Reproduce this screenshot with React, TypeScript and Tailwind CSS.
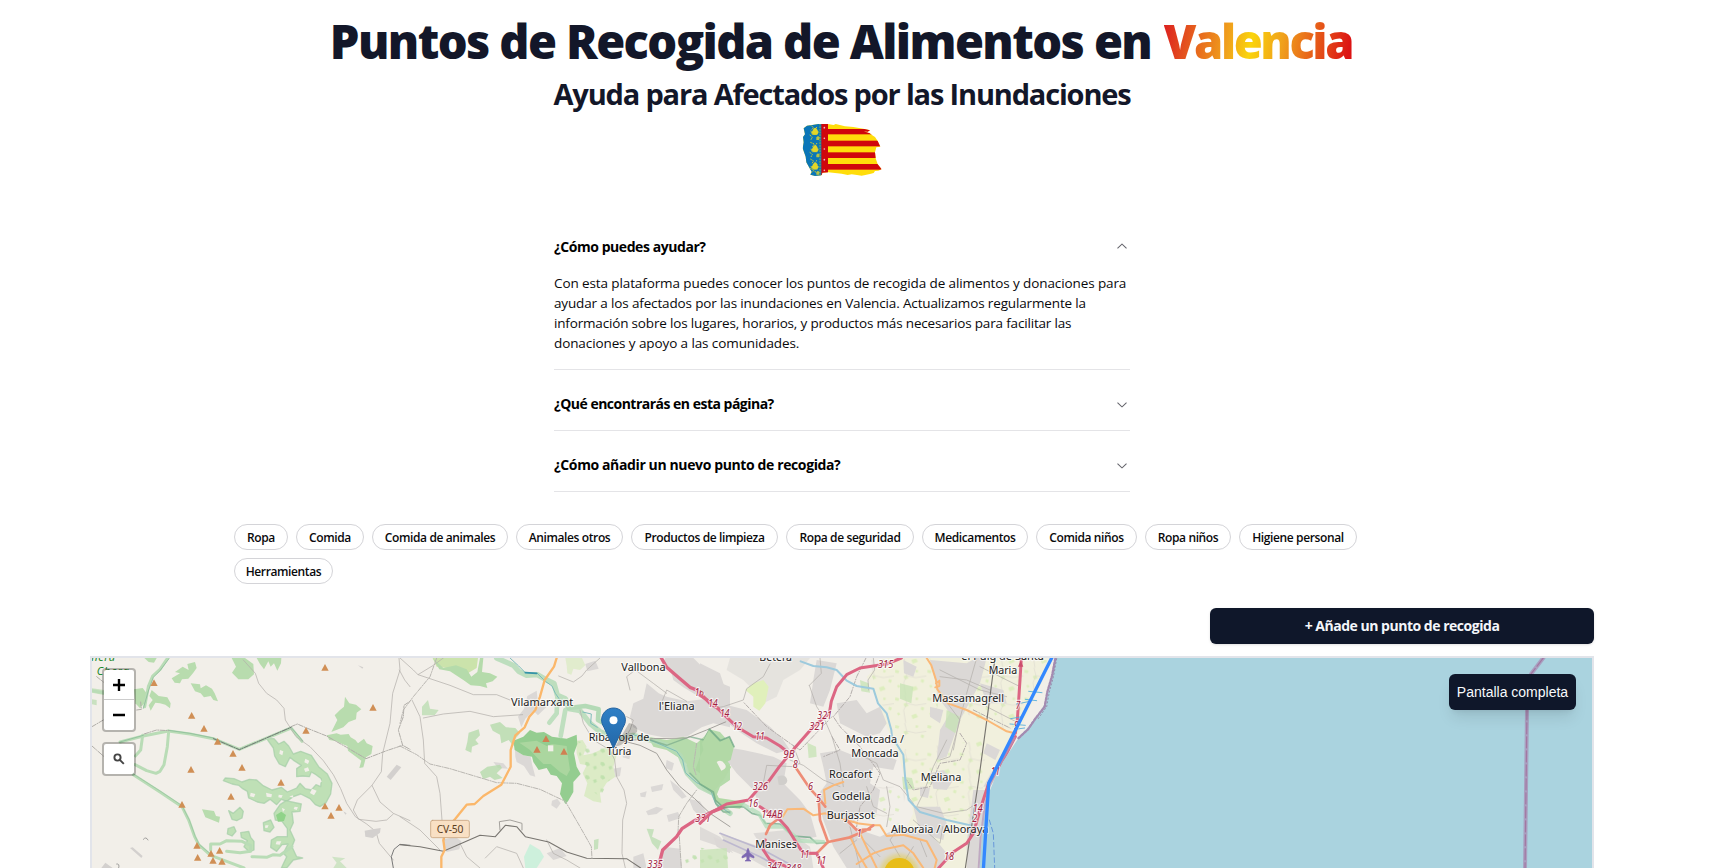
import { useState } from "react";

const chips: { label: string; w: string }[] = [
  { label: "Ropa", w: "w-[54px]" },
  { label: "Comida", w: "w-[68px]" },
  { label: "Comida de animales", w: "w-[136px]" },
  { label: "Animales otros", w: "w-[107px]" },
  { label: "Productos de limpieza", w: "w-[147px]" },
  { label: "Ropa de seguridad", w: "w-[128px]" },
  { label: "Medicamentos", w: "w-[106px]" },
  { label: "Comida niños", w: "w-[101px]" },
  { label: "Ropa niños", w: "w-[86px]" },
  { label: "Higiene personal", w: "w-[118px]" },
  { label: "Herramientas", w: "w-[99px]" },
];

const faqs = [
  {
    q: "¿Cómo puedes ayudar?",
    t: "tracking-[-0.44px]",
    a: [
      { text: "Con esta plataforma puedes conocer los puntos de recogida de alimentos y donaciones para", t: "tracking-[-0.105px]" },
      { text: "ayudar a los afectados por las inundaciones en Valencia. Actualizamos regularmente la", t: "tracking-[-0.145px]" },
      { text: "información sobre los lugares, horarios, y productos más necesarios para facilitar las", t: "tracking-[-0.17px]" },
      { text: "donaciones y apoyo a las comunidades.", t: "tracking-[-0.1px]" },
    ],
  },
  {
    q: "¿Qué encontrarás en esta página?",
    t: "tracking-[-0.51px]",
    a: [{ text: "Puntos de recogida, horarios y productos necesarios.", t: "tracking-[-0.1px]" }],
  },
  {
    q: "¿Cómo añadir un nuevo punto de recogida?",
    t: "tracking-[-0.38px]",
    a: [{ text: "Pulsa el botón para añadir un punto nuevo.", t: "tracking-[-0.1px]" }],
  },
];

function Chevron({ open }: { open: boolean }) {
  return (
    <svg viewBox="0 0 15 15" className={open ? "size-4 rotate-180 text-[#64646b]" : "size-4 text-[#64646b]"} fill="currentColor">
      <path
        fillRule="evenodd"
        clipRule="evenodd"
        d="M3.13523 6.15803C3.3241 5.95657 3.64052 5.94637 3.84197 6.13523L7.5 9.56464L11.158 6.13523C11.3595 5.94637 11.6759 5.95657 11.8648 6.15803C12.0536 6.35949 12.0434 6.67591 11.842 6.86477L7.84197 10.6148C7.64964 10.7951 7.35036 10.7951 7.15803 10.6148L3.15803 6.86477C2.95657 6.67591 2.94637 6.35949 3.13523 6.15803Z"
      />
    </svg>
  );
}

function Flag() {
  return (
    <svg viewBox="0 0 285 210" className="h-[70px] w-[95px]">
      <defs>
        <clipPath id="brush">
          <path d="M26 40L36 32L52 30L70 27L98 27L116 30L122 27L150 34L175 36L205 41L225 46L218 50L206 49L224 55L234 62L240 66L248 78L256 95L244 97L240 112L242 130L248 148L260 163L250 167L240 168L236 174L225 177L200 182L186 180L170 178L158 180L140 176L100 172L82 173L80 181L60 183L46 179L50 170L44 160L34 142L32 125L23 100L26 82L24 66L30 58Z" />
        </clipPath>
      </defs>
      <g clipPath="url(#brush)">
        <rect width="285" height="210" fill="#ffdd0b" />
        <g fill="#d0060c">
          <rect x="80" y="42" width="200" height="16" />
          <rect x="80" y="77" width="200" height="17" />
          <rect x="80" y="112" width="200" height="17" />
          <rect x="80" y="147" width="200" height="17" />
          <rect x="78" y="20" width="21" height="160" />
        </g>
        <rect x="15" y="20" width="64" height="170" fill="#0a76b8" />
        <g fill="none" stroke="#c9ca35" strokeWidth="3">
          <path d="M75 26v155" stroke="#5d9b6c" strokeWidth="5" strokeDasharray="5 3" />
          <path d="M46 30l10 8l-8 8M66 36l-6 6l8 6M46 82l12 5l-6 9M66 84l-5 8M46 132l10 6l-6 8M66 136l-6 6M48 174l8-7l9 6M44 60l8 6l-4 8M44 112l8 6l-4 8M44 160l8 4" strokeDasharray="5 2" />
        </g>
        {[40, 92, 144].map((y) => (
          <g key={y} fill="#e3d628">
            <path d={`M54 ${y + 4}q7-12 13 0l3 10l-6 5h-8l-6-6z`} />
            <path d={`M46 ${y + 9}l26 0l-5 11h-16z`} opacity=".65" />
            <path d={`M64 ${y + 27}l5-4l5 4l-2 8h-8z`} opacity=".8" />
          </g>
        ))}
        <g fill="#f2b8c8">
          {[38, 70, 102, 134, 166].map((y) => (
            <circle key={y} cx="88" cy={y} r="2.5" />
          ))}
        </g>
      </g>
    </svg>
  );
}

const peaksWest = [
  [222, 129], [335, 227], [372, 266], [413, 305], [459, 341], [333, 389], [486, 383], [603, 428], [453, 470], [306, 494],
  [735, 83], [879, 203], [678, 272], [735, 499], [777, 503], [753, 527], [351, 617], [419, 632], [393, 641], [353, 653], [399, 662], [426, 665],
];

type LabelProps = { x: number; y: number; w: number; children: string; size?: number };
function Place({ x, y, w, children, size = 35 }: LabelProps) {
  return (
    <text x={x} y={y} textLength={w} fontSize={size} lengthAdjust="spacingAndGlyphs" fill="#222" stroke="#fff" strokeOpacity=".65" strokeWidth="7" strokeLinejoin="round" paintOrder="stroke">
      {children}
    </text>
  );
}
function Exit({ x, y, w, children }: LabelProps) {
  return (
    <text x={x} y={y} textLength={w} lengthAdjust="spacingAndGlyphs" fontSize="30" fontStyle="italic" fill="#a01f42" stroke="#fff" strokeOpacity=".7" strokeWidth="7" paintOrder="stroke">
      {children}
    </text>
  );
}

function RegionMap() {
  return (
    <svg viewBox="92 658 1500 210" className="block h-[210px] w-[1500px] font-['Noto_Sans',sans-serif]">
      <defs>
        <filter id="soft" x="-50%" y="-50%" width="200%" height="200%">
          <feGaussianBlur stdDeviation="6" />
        </filter>
        <linearGradient id="pin" x1="0" y1="0" x2="0" y2="1">
          <stop offset="0" stopColor="#2e7fc6" />
          <stop offset="1" stopColor="#2468a8" />
        </linearGradient>
        <pattern id="fields" width="97" height="83" patternUnits="userSpaceOnUse">
          <path d="M4 6l12 3l-3 8l-10-2zM28 26l9-4l7 9l-11 5zM66 6l7 2l-2 7l-7-2zM9 53l6-2l4 7l-7 3zM52 60l14-5l6 10l-16 6zM82 34l9 3l-3 9l-8-4z" fill="#d2edae" opacity=".65" />
          <path d="M32 0l6 24l-9 21l6 38M38 24l27 6l32-5" fill="none" stroke="#d8d5cc" strokeWidth="1.600" />
        </pattern>
        <pattern id="scrub" width="46" height="40" patternUnits="userSpaceOnUse">
          <path d="M5 5l9 2l4 8l-8 4l-7-6zM27 20l9-3l3 8l-8 5z" fill="#b9dfa8" opacity=".8" />
        </pattern>
      </defs>
      <rect x="92" y="658" width="1500" height="210" fill="#f2efe9" />

      {/* western hills */}
      <g transform="translate(80 640) scale(.333333)" strokeLinejoin="round" strokeLinecap="round">
        <g fill="#b8dcae">
          <path d="M455 54L495 54L520 72L522 103L505 118L475 118L456 98L468 80Z" />
          <path d="M530 54L604 54L603 70L592 92L582 70L572 80L565 64L552 88L540 72Z" />
          <path d="M275 115L300 100L285 96L308 80L326 90L322 72L345 66L350 84L340 98L325 116L306 118L300 130L284 128Z" />
          <path d="M332 130L360 133L362 145L378 136L396 146L404 160L414 184L400 180L392 168L372 172L362 160L345 154Z" />
          <path d="M162 148L188 144L200 160L193 190L180 205L166 190Z" />
          <path d="M215 150L236 168L262 172L272 190L270 205L256 194L240 190L226 188L212 212L206 196L218 180L208 168Z" />
          <path d="M193 54L230 54L222 68L206 66Z" />
          <path d="M795 170L808 190L828 194L844 208L830 218L828 238L806 246L790 262L754 276L772 240L764 226L780 210L792 200Z" />
          <path d="M740 286L770 280L782 284L806 282L812 292L826 300L834 310L852 296L860 310L878 318L874 342L858 352L850 382L838 384L844 362L820 344L804 332L802 318L786 312L770 304L748 300Z" />
          <path d="M366 508L402 513L408 528L420 530L417 548L402 542L376 532Z" />
          <path d="M36 145L72 150L72 165L36 158Z M36 178l14 2v16l-14-3z" opacity=".7" />
          <path d="M756 650L796 655L780 664L800 684L760 684L770 668Z" opacity=".6" />
        </g>
        <g fill="#bfe0b6" stroke="#a4cda6" strokeWidth="4" strokeOpacity=".7">
          <path d="M560 296L582 296L596 312L612 304L626 318L640 342L662 334L694 346L716 380L742 402L756 430L752 462L738 488L720 500L706 494L690 476L662 462L640 470L620 484L604 478L590 494L570 478L552 490L532 486L506 474L502 454L488 446L476 436L456 432L430 422L436 414L462 416L486 426L508 418L530 420L548 436L576 450L604 442L622 456L650 444L660 430L676 446L694 450L708 434L722 440L724 416L708 404L694 396L688 410L668 408L650 410L650 386L664 376L642 362L630 352L616 380L598 372L584 348L580 324Z" />
          <path d="M600 494L618 482L664 492L660 514L636 516L640 548L630 570L644 600L636 620L650 650L668 654L640 660L620 684L604 684L620 650L610 640L624 612L606 614L590 634L572 622L574 600L592 590L608 590L622 590L622 566L606 544L586 540L582 520Z" />
          <path d="M550 548L572 540L582 562L570 576L552 572Z M444 566L462 560L468 574L456 588L442 582Z M482 578L506 574L512 592L522 604L522 630L508 636L492 620L502 602L484 592Z M446 512L460 520L480 502L490 514L486 534L470 542L456 538Z" />
        </g>
        <path
          d="M512 458l14 4l-4 10l-12-3zM558 458l18 5l-2 9l-14-2zM596 464l12 2l-4 8l-9-2zM672 386l12-4l4 10l-12 4zM696 446l14 6l-8 14l-12-7zM590 604l14 0l-5 10l-12-1zM556 556l10 0l-4 8l-7-1zM644 500l10 2l-4 8l-9-3zM600 330l10 4l-3 12l-9-5zM676 356l12 6l-4 10l-11-5zM716 414l10 10l-8 6zM628 470l10-4l3 7zM606 504l9 4l-6 8z"
          fill="#f2efe9"
        />
        <path d="M588 525l16-10l14 10l-6 18l-18 2z" fill="#90d389" />
        <g fill="none" stroke="#b9dcb6" strokeWidth="9">
          <path d="M263 54L240 88L218 108L205 140L194 200" />
          <path d="M120 306L190 288L265 273L330 282L400 296L478 328L633 264L666 304" />
          <path d="M266 274L262 320L252 374L240 394L228 400L200 392L165 374M188 286L182 330L166 348" />
          <path d="M160 404L240 456L306 500L326 540L344 590L356 614L392 646L440 664L492 684" />
          <path d="M392 630L392 612L420 612L440 602L486 604L512 616L512 634L480 638L440 634M516 650L560 652L580 644L600 646L636 620" />
          <path d="M36 152L70 158" />
        </g>
        <g fill="none" stroke="#8dbd9a" strokeWidth="2.5">
          <path d="M265 271L330 280L400 294L478 329L633 262L668 302M190 286L120 306M267 56L240 92L220 112L206 150L190 205" />
          <path d="M160 402L240 453L306 497L328 540L346 590L358 614L394 644" strokeOpacity=".7" />
        </g>
        <g fill="none" stroke="#b3b0ab" strokeWidth="2.2">
          <path d="M490 60L526 100L536 130L560 160L590 180L612 205L616 240L648 290L690 320L730 362L760 404L782 446L800 490L826 530L860 552L888 575L898 610L940 660" />
          <path d="M957 54L960 90L938 160L930 250L908 340L904 395L876 436L900 486L940 520L990 542M876 436L832 480L820 510L836 538L888 544L920 540L940 522" />
          <path d="M958 90L974 120L990 140" />
          <path d="M940 684L934 650L942 628L960 613L990 616" stroke="#777" strokeWidth="3" />
        </g>
        <g fill="none" stroke="#b0ada8" strokeWidth="3" strokeDasharray="14 4 3 4">
          <path d="M192 282L230 270L266 272M633 260L652 252L680 264L740 288L800 322L858 356L920 332L968 316L990 328M968 316L955 270L970 230L972 196L990 184" />
          <path d="M36 260L70 240M36 318L70 348M50 110L70 126M170 210L184 208L182 186" />
          <path d="M400 296L478 329L633 262" stroke="#777" />
        </g>
        <g fill="#d3d0ce">
          <path d="M854 572L878 568L902 564L900 578L878 594L856 590Z" />
          <path d="M920 410L950 374L964 382L932 420Z" />
          <path d="M150 624L158 622L188 648L184 654ZM64 684l12-16l22 16zM790 514l10 6l-4 4zM834 76l16 6l-3 4z" />
        </g>
        <path d="M190 598q8-10 14 2M110 672q10-2 6 12" fill="none" stroke="#777" strokeWidth="2" />
        <g fill="#d08f55">
          {peaksWest.map(([x, y]) => (
            <path key={`${x}-${y}`} d={`M${x} ${y - 11}l11 20h-22z`} />
          ))}
        </g>
        <g fill="#1d8a2c" fontStyle="italic" fontSize="33">
          <text x="34" y="62" textLength="71">nera</text>
          <text x="50" y="104" textLength="96">Chera</text>
        </g>
      </g>

      {/* Túria valley */}
      <g transform="translate(400 640) scale(.333333)" strokeLinejoin="round" strokeLinecap="round">
        <g fill="#dbd8d6">
          <path d="M740 130L776 160L800 170L860 184L920 176L990 196L990 262L940 250L905 262L860 290L790 292L740 282L700 262L690 230L700 190L730 176Z" />
          <path d="M796 54L880 54L916 90L940 120L990 140L990 210L940 196L890 166L850 142L820 120L812 90L780 84Z" />
          <path d="M382 168L410 152L414 190L440 200L414 226L400 212L376 236L364 262L354 230L372 206Z" />
          <path d="M345 330L370 346L392 350L396 372L406 410L390 406L372 378L350 366L346 350Z" />
          <path d="M126 600L166 590L184 604L178 628L140 636Z" />
          <path d="M456 482L472 476L482 490L470 506L454 496Z" />
          <path d="M640 386L664 382L660 408L646 412ZM670 330L694 332L688 358L668 352ZM752 440L790 432L786 450L756 456ZM738 514L770 500L790 506L770 522L744 526ZM720 460l20-6l-4 18l-14-2zM800 526l34-10l8 18l-36 12zM866 476L900 484L920 520L900 530L880 510ZM810 420L836 440L860 470L846 476L820 450Z" />
          <path d="M790 620L840 626L846 684L790 684L780 650ZM700 650L730 640L740 684L700 684ZM556 72l30-10l10 24l-34 8zM800 360l22 10l-6 22l-20-8z" />
          <path d="M940 590L990 610L990 640L950 620ZM440 640L480 624L500 648L460 660ZM280 366l30 4l14 16l-30-2z" />
        </g>
        <path d="M98 54L234 54L230 84L206 98L212 118L196 112L180 88L140 84L110 80Z" fill="#cbe3ab" />
        <g fill="#dcebc6">
          <path d="M528 302L548 300L560 320L550 346L580 340L620 320L650 346L640 380L646 410L620 428L600 460L604 488L580 484L552 468L562 430L548 400L560 376L540 372L530 340Z" />
          <path d="M496 54L546 54L556 76L540 90L520 86L514 104L502 100L500 76Z" opacity=".8" />
        </g>
        <path d="M528 302L650 330L640 400L600 470L560 440Z" fill="url(#scrub)" />
        <g fill="#b5dbab">
          <path d="M98 54L130 84L168 76L200 88L214 110L232 96L240 54L250 54L246 96L270 100L292 110L278 124L258 130L262 144L240 138L212 136L190 120L150 94L118 88Z" />
          <path d="M206 278L236 268L240 286L226 300L236 312L216 320L214 338L196 330L202 306Z M270 254L300 246L318 262L346 264L360 280L346 296L340 318L326 300L304 310L300 284L278 272Z M240 396L262 380L300 374L306 384L290 400L308 414L284 420L270 410L250 418Z" opacity=".8" />
          <path d="M740 566L762 568L756 590L784 604L774 630L756 610Z M66 200L84 180L90 206L116 210L104 226L66 226Z M582 600l14-4l-2 30l-12 4z" opacity=".7" />
        </g>
        <path d="M340 302L370 290L390 270L410 278L432 276L456 290L500 296L530 284L532 312L522 340L530 380L542 402L520 426L520 456L504 484L496 492L480 462L486 430L470 408L452 404L440 384L416 390L400 366L396 350L370 346L344 330Z" fill="#94cd90" />
        <path d="M358 308L410 302L440 318L456 312L500 318L504 350L510 390L500 408L480 396L452 372L430 372L412 354L390 330Z" fill="#abd69f" />
        <path d="M444 316l16 0l0 18l-16 0z" fill="#f2efe9" />
        <path d="M744 290L800 300L850 290L890 310L912 290L928 268L960 276L990 310L990 420L960 440L948 470L910 450L886 418L866 400L858 370L832 350L800 330L760 320Z" fill="#b5dbab" />
        <path d="M900 300L940 290L970 320L940 360L900 400L886 390L900 350Z" fill="#abd6a1" />
        <g fill="none">
          <path d="M290 54L340 76L356 94L380 106L412 104L440 120L462 130L472 166L496 176L506 206L540 212L570 250L600 275L650 296L700 286L750 300L800 316L840 346L862 400L900 440L940 460L960 500L990 520" stroke="#b4dab6" strokeWidth="16" strokeOpacity=".85" />
          <path d="M472 170L470 220L448 248M496 210L482 288" stroke="#bfdfbf" strokeWidth="14" />
          <path d="M506 204L556 198L596 208L594 240L616 252" stroke="#b4dab6" strokeWidth="14" />
          <path d="M330 54L356 78L376 98L412 100L436 124L456 138L466 160L480 180L510 196M548 216L574 222L572 250L592 262M700 284L760 304L830 334L848 360L856 398L890 428L930 444L946 490L990 520" stroke="#7dbcb9" strokeWidth="3" />
          <path d="M744 298L800 316L870 290L912 300L928 268L960 300L990 320M870 400L900 430L942 460L948 492L970 516L990 516" stroke="#7aab8c" strokeWidth="4.500" strokeOpacity=".7" />
          <path d="M376 98L410 100" stroke="#3593a8" strokeWidth="5" />
        </g>
        <g fill="none" stroke="#b3b0ab" strokeWidth="2.2">
          <path d="M0 54L40 90L54 104L100 76L130 54M54 104L150 136L220 164L290 164L330 180M70 234L130 222L210 214L280 230L368 224M36 180L60 230L70 300L74 370L110 410L120 460L126 540L134 600" />
          <path d="M476 108L520 126L546 108L560 90L600 54M540 210L550 250L580 300L630 330L644 360L650 410L672 450L680 490L668 540L666 640L676 684M680 230L700 240L690 270L670 300M690 150L680 110L706 90L760 130L800 160M780 200L800 150L860 184" />
          <path d="M660 300L720 316L770 340L800 390L840 440L884 476L930 520L960 540L990 560M990 240L920 270L860 294L760 296L700 300M300 570L298 545L330 540L366 550L366 570" stroke="#9e9b97" strokeWidth="2.800" />
          <path d="M0 530L60 570L120 630M180 610L200 650L240 684M440 600L460 640L500 660L540 684M256 654L290 620L350 640L370 684" />
        </g>
        <path d="M0 614L60 620L130 634L180 612L240 586L286 590L316 556L350 560L376 590L446 606L500 636L560 655L680 656L722 684" fill="none" stroke="#77746f" strokeWidth="3.2" />
        <g fill="none" stroke="#b9b6b1" strokeWidth="3" strokeDasharray="14 4 3 4">
          <path d="M110 54L90 110L40 170L10 210L0 250M0 318L50 344L90 372L150 386L230 410L290 428L350 430L420 448L496 484L540 560L574 620L576 656M834 580L836 530L860 490L890 450M838 590L844 684M890 310L880 380L888 404" />
        </g>
        <path d="M470 54L462 80L434 120L420 170L406 210L388 230L374 262L346 286L332 330L332 380L304 434L250 468L224 492L200 494L166 536L140 566L130 600L134 630L124 650L124 684" fill="none" stroke="#fbb76a" strokeWidth="7" />
        <path d="M372 650L390 612L420 630L432 650L410 684L376 684Z" fill="#c9f0da" opacity=".9" />
        <path d="M850 640L880 622L990 630L990 684L860 684Z" fill="url(#scrub)" />
        <path d="M784 54L800 82L840 116L870 142L890 150L930 190L962 210L990 238" fill="none" stroke="#dc6683" strokeWidth="10" />
        <path d="M774 684L788 630L830 590L846 566L880 544L940 514L990 494" fill="none" stroke="#dc6683" strokeWidth="10" />
        <g fill="#d08052">
          <path d="M438 286l11 20h-22zM411 318l11 20h-22zM492 324l11 20h-22z" />
        </g>
        <g>
          <rect x="92" y="541" width="116" height="52" rx="6" fill="#f9e0c4" stroke="#c9a580" strokeWidth="2.5" />
          <text x="110" y="580" textLength="80" fontSize="31" fill="#5b3d1e">CV-50</text>
        </g>
        <Place x={333} y={198} w={187}>Vilamarxant</Place>
        <Place x={664} y={92} w={133}>Vallbona</Place>
        <Place x={776} y={210} w={108}>l'Eliana</Place>
        <Place x={566} y={304} w={182}>Riba-roja de</Place>
        <Place x={620} y={346} w={74}>Túria</Place>
        <Exit x={884} y={167} w={28}>16</Exit>
        <Exit x={886} y={547} w={46}>331</Exit>
        <Exit x={742} y={684} w={46}>335</Exit>
      </g>

      {/* Valencia metropolitan area */}
      <g transform="translate(700 640) scale(.333333)" strokeLinejoin="round" strokeLinecap="round">
        <path d="M560 54L1060 54L950 290L870 420L838 684L560 684L640 520L600 360L560 260L530 180L500 110Z" fill="#f1f0dd" />
        <path d="M500 60L690 54L720 140L700 300L600 300L540 180Z M590 330L860 300L840 560L640 500Z M780 60L1050 60L950 280L740 200Z M520 440L620 440L600 560L520 540Z" fill="url(#fields)" />
        <g fill="#dbd8d6">
          <path d="M90 54L330 54L300 90L250 120L230 170L190 190L160 150L130 120L80 90Z" opacity=".55" />
          <path d="M0 70L60 100L80 160L50 180L0 150Z M60 190L140 210L210 260L250 300L270 330L230 340L170 310L110 270L60 230Z" />
          <path d="M350 60L410 70L390 150L370 200L330 190L340 120Z M410 190L470 180L500 220L540 200L560 250L540 280L500 290L460 270L420 250Z" />
          <path d="M70 320L130 330L220 350L260 370L250 430L300 480L330 520L350 590L300 600L260 560L180 500L160 450L110 400L80 360Z" />
          <path d="M360 340L420 330L470 350L540 340L590 360L580 390L520 380L510 430L540 450L530 520L480 520L450 560L540 590L600 560L700 590L740 640L720 684L440 684L400 620L370 540L350 470L380 430L370 380Z" />
          <path d="M690 60L800 70L830 54L860 54L840 130L780 240L740 350L710 360L720 270L750 220L720 180Z M840 130L910 150L920 190L860 190Z M900 350L940 290L920 370L870 440L850 440Z M820 450L860 450L850 600L836 684L800 684L800 610Z" />
          <path d="M690 400L730 390L760 420L740 450L700 446Z M640 500L720 500L740 550L730 600L660 580Z M610 60L650 80L640 110L612 100ZM690 200L730 210L720 250L690 230ZM660 440l30 4l-6 30l-24-6zM860 310l40 20l-14 30l-36-20z" />
          <path d="M160 580L260 570L330 620L340 684L200 684L190 630Z M0 560L60 590L100 640L60 620L0 600Z M60 580L180 620L250 684L200 684L140 650L90 630Z" opacity=".9" />
        </g>
        <path d="M136 150L160 130L190 120L206 140L196 190L178 212L160 200L160 170Z" fill="#e0f0bb" />
        <g fill="#c6e3b3">
          <path d="M322 308L348 320L350 350L326 354ZM480 120l26 10l4 28l-26-4zM740 210l40 20l-14 50l-30-20zM606 410l30 4l8 34l-34 0zM0 630L80 624L84 684L0 684ZM600 130l40 10l-6 50l-34-14z" opacity=".75" />
          <path d="M232 410q26-10 30 12q-2 16-26 12z" fill="#d0cecb" />
        </g>
        <path d="M0 350L10 330L6 310L28 268L60 300L88 290L102 320L92 360L72 370L94 380L70 420L44 450L56 474L136 486L120 506L70 500L44 480L40 460L0 432Z" fill="#b2d9a6" />
        <path d="M28 268L60 302L88 290L102 320M0 432L40 456L46 480L70 502L130 500L156 520L180 526L196 550L240 552L280 588L330 592L350 610L384 608" fill="none" stroke="#6ca786" strokeWidth="5" strokeOpacity=".75" />
        <path d="M130 494L176 520L200 560L250 560L300 602L370 606" fill="none" stroke="#aedcb6" strokeWidth="12" strokeOpacity=".7" />
        <path d="M50 366q14-10 24 6q10 12-10 20z" fill="#f2efe9" />
        <g fill="none" stroke="#b3b0ab" strokeWidth="2.2">
          <path d="M210 72L190 110L140 146L130 180L70 200L44 204M360 54L364 100L328 136M328 136L350 200L370 230L396 290L420 370L430 440M506 150L504 120L524 90L520 54M280 318L300 370L280 380L200 376L190 430M270 360L310 376L370 420L420 440" />
          <path d="M640 490L600 440L550 420L530 370L490 350M740 300L700 380L670 460L650 500L730 520L800 510L830 490M720 160L780 240L750 350L720 360M830 54L800 160L776 250L760 330M860 200L946 244M720 90L840 150L920 170M840 80L960 140M720 110L800 120L870 150" />
          <path d="M560 440L570 500L560 560M500 440L520 500L560 520M640 540L720 610L728 560M600 560L570 600L600 650M490 600L540 650M640 620L600 684M450 560L480 684M660 600L680 650M420 640L470 600" />
        </g>
        <g fill="none" stroke="#b3adab" strokeWidth="3" strokeDasharray="13 5 3 5">
          <path d="M498 54L470 110L450 170L400 230L420 260L450 290L480 320L540 400L520 450L480 500L470 560M396 230L300 330L270 310L200 260L130 186M396 290L420 330L370 350M780 280L800 310L780 360L720 370L690 440L640 450L620 420M820 210L930 264" />
        </g>
        <path d="M885 54L866 200L836 420L796 684" fill="none" stroke="#77746f" strokeWidth="3.4" />
        <path d="M60 580L190 630L290 684M70 600L180 650L240 684" fill="none" stroke="#bdb8cf" strokeWidth="5" />
        <path d="M302 64L340 78L380 82L410 90L440 122L470 138L520 146L534 190L560 220L574 270L576 290L610 344L616 420L626 480L660 516L740 540L810 556" fill="none" stroke="#9dcadd" strokeWidth="6" />
        {/* secondary roads */}
        <g fill="none" stroke="#fab877" strokeWidth="6">
          <path d="M680 54L694 76L708 120L712 148L744 190L800 210L860 240L920 274L944 280M708 130l10-8l0 16l-12 4" />
          <path d="M376 490L372 450L400 436L430 426M248 530L262 508L310 506L340 526L376 520L400 530L470 548" />
          <path d="M450 590L474 640L500 684M480 580L530 684M470 672L520 640L560 626L610 616L640 640L670 684M470 550L520 556L540 556L560 588L610 584L680 604L710 660L704 684" />
        </g>
        <g fill="none" stroke="#ee8d76" strokeWidth="8">
          <path d="M288 384L330 446L352 470L376 500M356 478L360 540L384 606L450 592L500 570L520 556M230 540L210 556L198 582M384 606L350 640L330 640M440 540L470 570L510 568" />
        </g>
        <g fill="none" stroke="#dc6683" strokeWidth="9">
          <path d="M604 54L560 72L480 84L440 104L410 140L394 184L388 220L340 260L284 324L238 380L206 424L172 450L146 480L80 492L36 516L0 550" />
          <path d="M0 166L40 192L72 224L110 260L160 290L200 294L240 318L270 342M240 540L262 564L290 610L310 640L350 640M180 500L240 540M196 600L190 630L210 660L260 680M350 640L370 684" />
          <path d="M964 54L960 120L952 240L946 280M946 290L906 366L866 430L840 510L820 580L800 610L760 636L716 684" />
        </g>
        <path d="M962 62l8 18h-16z" fill="#cc4d6d" />

        {/* sea */}
        <path d="M1066 52L2700 52L2700 690L838 690L846 590L858 480L884 416L908 366L958 290L984 262L1012 226L1036 190L1048 140L1056 100Z" fill="#aad3df" />
        <path d="M1066 56L1056 108L1042 156L1034 200L1006 236L984 268L954 296" fill="none" stroke="#a48ab0" strokeWidth="7" strokeDasharray="7 5" />
        <path d="M1070 56L1061 108L1048 156L1040 200L1012 240" fill="none" stroke="#8c7399" strokeWidth="2" strokeDasharray="4 7" />
        <path d="M944 294L900 374L868 440L854 500L842 590L836 684" fill="none" stroke="#b495b8" strokeWidth="6" strokeOpacity=".7" />
        <path d="M986 154l40 4M976 178l34 4M950 192l40-8M932 236l34-6M930 252l46 4M944 268l30-4" stroke="#4ca8d8" strokeWidth="2.5" />
        <path d="M868 540L880 580L884 684" fill="none" stroke="#5b8cd8" strokeWidth="2.5" strokeDasharray="14 9" />

        <Place x={178} y={62} w={98}>Bétera</Place>
        <Place x={784} y={61} w={248}>el Puig de Santa</Place>
        <Place x={866} y={103} w={86}>Maria</Place>
        <Place x={697} y={186} w={215}>Massamagrell</Place>
        <Place x={438} y={308} w={174}>Montcada /</Place>
        <Place x={454} y={351} w={142}>Moncada</Place>
        <Place x={387} y={413} w={130}>Rocafort</Place>
        <Place x={662} y={423} w={122}>Meliana</Place>
        <Place x={396} y={480} w={116}>Godella</Place>
        <Place x={380} y={537} w={144}>Burjassot</Place>
        <Place x={573} y={580} w={292}>Alboraia / Alboraya</Place>
        <Place x={166} y={624} w={125}>Manises</Place>
        <Exit x={25} y={200} w={28}>14</Exit>
        <Exit x={60} y={231} w={28}>14</Exit>
        <Exit x={98} y={269} w={28}>12</Exit>
        <Exit x={166} y={300} w={28}>11</Exit>
        <Exit x={250} y={354} w={34}>9B</Exit>
        <Exit x={278} y={384} w={15}>8</Exit>
        <Exit x={352} y={237} w={44}>321</Exit>
        <Exit x={328} y={270} w={46}>321</Exit>
        <Exit x={534} y={84} w={46}>315</Exit>
        <Exit x={158} y={451} w={46}>326</Exit>
        <Exit x={145} y={501} w={29}>16</Exit>
        <Exit x={184} y={535} w={64}>14AB</Exit>
        <Exit x={324} y={449} w={15}>6</Exit>
        <Exit x={348} y={486} w={15}>5</Exit>
        <Exit x={471} y={591} w={14}>1</Exit>
        <Exit x={300} y={653} w={28}>11</Exit>
        <Exit x={349} y={673} w={30}>11</Exit>
        <Exit x={200} y={690} w={46}>347</Exit>
        <Exit x={258} y={696} w={46}>348</Exit>
        <Exit x={818} y={517} w={30}>14</Exit>
        <Exit x={817} y={545} w={15}>2</Exit>
        <Exit x={872} y={404} w={28}>11</Exit>
        <Exit x={947} y={208} w={14}>7</Exit>
        <Exit x={942} y={268} w={14}>9</Exit>
        <Exit x={732} y={659} w={30}>18</Exit>
        <path d="M144 626q4 2 4 12l14 11v5l-14-5l-1 9l6 5h-18l6-5l-1-9l-14 5v-5l14-11q0-10 4-12z" fill="#7d68b2" stroke="#7d68b2" strokeWidth="2" />

        <path d="M1059 46L866 430L850 690" fill="none" stroke="#3388ff" strokeWidth="10" />
        <circle cx="598" cy="702" r="60" fill="#e3cc52" fillOpacity=".6" filter="url(#soft)" />
        <circle cx="598" cy="700" r="46" fill="#e8bd18" />
      </g>

      {/* maritime boundary */}
      <g fill="none">
        <path d="M1544 657L1531 674L1527 710L1526 790L1525 870" stroke="#a9a0c0" strokeWidth="4" />
        <path d="M1544 657L1531 674L1527 710L1526 790L1525 870" stroke="#a377a2" strokeWidth="1.2" strokeDasharray="12 2" />
      </g>

      {/* marker */}
      <path d="M615 747l14-24q10 2 8 9l-16 13z" fill="#000" opacity=".2" />
      <g transform="translate(601 707.500)">
        <path d="M12.5 .5C5.9.5.6 5.9.6 12.4c0 2.6.8 5 2.3 7.3L12.5 40.8L22.1 19.7c1.5-2.3 2.3-4.7 2.3-7.3C24.400 5.9 19.100.5 12.500.5Z" fill="url(#pin)" stroke="#2463a0" />
        <circle cx="12.500" cy="12.800" r="4" fill="#fff" />
      </g>
    </svg>
  );
}

export default function App() {
  const [open, setOpen] = useState(0);
  return (
    <main className="h-[868px] w-full overflow-hidden bg-white font-['Open_Sans','Noto_Sans',sans-serif] text-[#09090b]">
      <div className="ml-[90px] flex w-[1504px] flex-col items-center">
        <h1 className="mt-[17px] flex h-12 items-center text-[47px] leading-none font-extrabold whitespace-nowrap text-[#131729]">
          <span className="tracking-[-1.61px]">Puntos de Recogida de Alimentos en&nbsp;</span>
          <span className="ml-[2px] bg-[linear-gradient(100deg,#dc1f1f_0%,#f0a01c_34%,#fad40c_46%,#f0a01c_62%,#dc1414_96%)] bg-clip-text pr-[2px] tracking-[-2.4px] text-transparent">
            Valencia
          </span>
        </h1>
        <h2 className="mt-[11px] flex h-9 items-center text-[29px] leading-9 font-bold whitespace-nowrap tracking-[-1.17px] text-[#131729]">
          Ayuda para Afectados por las Inundaciones
        </h2>
        <div className="mt-[3px] h-[70px]">
          <Flag />
        </div>

        <section className="mt-[44px] w-[576px]">
          {faqs.map((f, i) => (
            <div key={f.q} className="mt-2 border-b border-[#e4e4e7]">
              <button
                onClick={() => setOpen(open === i ? -1 : i)}
                className={`flex w-full items-center justify-between text-left text-[14px] leading-5 font-bold text-black ${i === 0 ? "pb-4" : "py-4"}`}
              >
                <span className={`whitespace-nowrap ${f.t}`}>{f.q}</span>
                <Chevron open={open === i} />
              </button>
              {open === i && (
                <p className="pb-4 text-[13.5px] leading-5 whitespace-nowrap">
                  {f.a.map((line) => (
                    <span key={line.text} className={`block ${line.t}`}>{line.text}</span>
                  ))}
                </p>
              )}
            </div>
          ))}
        </section>

        <section className="mt-8 flex w-[1216px] flex-wrap gap-2">
          {chips.map((c) => (
            <button
              key={c.label}
              className={`flex h-[26px] items-center justify-center rounded-full border border-[#d4d4d8] pt-0.5 text-[12px] font-semibold whitespace-nowrap tracking-[-0.38px] ${c.w}`}
            >
              {c.label}
            </button>
          ))}
        </section>

        <button className="mt-6 flex h-9 w-96 items-center justify-center self-end rounded-md bg-[#0f172a] pb-px text-[14px] font-bold tracking-[-0.48px] text-[#f4f6fa] shadow-sm">
          + Añade un punto de recogida
        </button>

        <section className="relative mt-3 h-[214px] w-[1504px] overflow-hidden border-2 border-b-0 border-[#e2e4ea]">
          <RegionMap />
          <div className="absolute top-[10px] left-[10px] flex flex-col gap-[10px]">
            <div className="flex flex-col overflow-hidden rounded border-2 border-black/25 bg-white bg-clip-padding">
              <button aria-label="Acercar" className="flex size-[30px] items-center justify-center border-b border-[#ccc]">
                <svg viewBox="0 0 12 12" className="size-3" stroke="#000" strokeWidth="2.400">
                  <path d="M0 6h12M6 0v12" />
                </svg>
              </button>
              <button aria-label="Alejar" className="flex size-[30px] items-center justify-center">
                <svg viewBox="0 0 12 12" className="size-3" stroke="#000" strokeWidth="2.400">
                  <path d="M0 6h12" />
                </svg>
              </button>
            </div>
            <button aria-label="Buscar" className="flex size-[34px] items-center justify-center rounded border-2 border-black/25 bg-white bg-clip-padding">
              <svg viewBox="0 0 12 12" className="size-3" fill="none" stroke="#444" strokeWidth="1.900">
                <circle cx="4.500" cy="4.500" r="3.100" />
                <path d="M6.800 6.800l4 4" />
              </svg>
            </button>
          </div>
          <button className="absolute top-4 right-4 flex h-9 w-[127px] items-center justify-center rounded-md bg-[#0f172a] font-['Liberation_Sans',sans-serif] text-[14px] whitespace-nowrap text-[#f8fafc] shadow-lg">
            Pantalla completa
          </button>
        </section>
      </div>
    </main>
  );
}
